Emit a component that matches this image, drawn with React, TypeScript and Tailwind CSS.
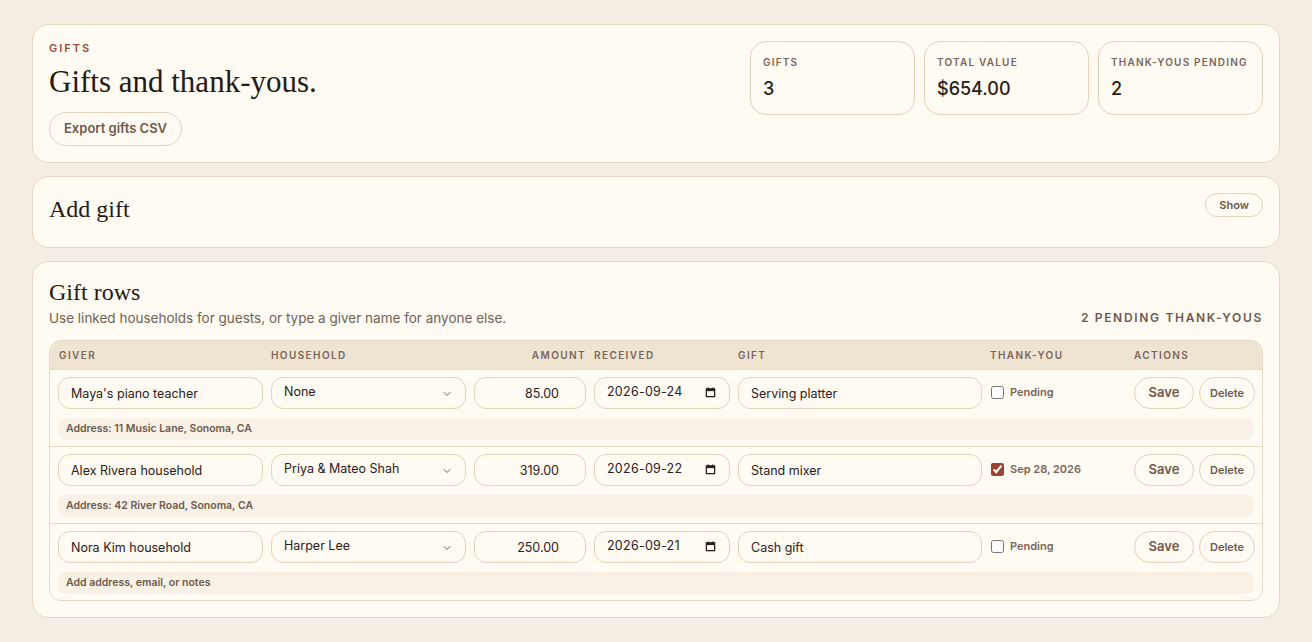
import { ChevronDown } from "lucide-react";

const sans = { fontFamily: "Inter, 'Noto Sans', sans-serif" };
const serif = { fontFamily: "'Liberation Serif', 'DejaVu Serif', serif" };

type Gift = {
  giver: string;
  household: string;
  amount: string;
  received: string;
  gift: string;
  thanked: string | null;
  note: string;
};

const gifts: Gift[] = [
  {
    giver: "Maya's piano teacher",
    household: "None",
    amount: "85.00",
    received: "2026-09-24",
    gift: "Serving platter",
    thanked: null,
    note: "Address: 11 Music Lane, Sonoma, CA",
  },
  {
    giver: "Alex Rivera household",
    household: "Priya & Mateo Shah",
    amount: "319.00",
    received: "2026-09-22",
    gift: "Stand mixer",
    thanked: "Sep 28, 2026",
    note: "Address: 42 River Road, Sonoma, CA",
  },
  {
    giver: "Nora Kim household",
    household: "Harper Lee",
    amount: "250.00",
    received: "2026-09-21",
    gift: "Cash gift",
    thanked: null,
    note: "Add address, email, or notes",
  },
];

const cols = "grid grid-cols-[205px_195px_112px_136px_244px_136px_121px] gap-x-2";

function CalendarGlyph() {
  return (
    <svg viewBox="0 0 12 12" className="h-[11px] w-[11px]" fill="none">
      <rect x="1.5" y="2" width="9" height="8.5" stroke="#2a211c" strokeWidth="1.4" />
      <rect x="1.5" y="2" width="9" height="2.5" fill="#2a211c" />
      <rect x="3" y="0.5" width="1.2" height="2" fill="#2a211c" />
      <rect x="7.8" y="0.5" width="1.2" height="2" fill="#2a211c" />
    </svg>
  );
}

function Stat({ label, value }: { label: string; value: string }) {
  return (
    <div className="rounded-2xl border border-[#e3d3bd] bg-[#fffaf2] px-3 pt-[13px] pb-[13px]">
      <p className="text-[10px] font-semibold uppercase tracking-[0.12em] text-[#7a665a]">{label}</p>
      <p className="mt-[7px] text-[18px] leading-6 font-medium text-[#2a211c]">{value}</p>
    </div>
  );
}

function GiftRow({ g, last }: { g: Gift; last: boolean }) {
  const field =
    "h-8 w-full rounded-xl border border-[#e3d3bd] bg-[#fffaf2] px-3 text-[12.5px] text-[#2a211c] outline-none";
  return (
    <div className={`px-2 pt-[7px] pb-[6px] ${last ? "" : "border-b border-[#e6d8c4]"}`}>
      <div className={`${cols} items-center`}>
        <input className={field} defaultValue={g.giver} />
        <div className="relative">
          <select className={`${field} appearance-none pb-[1px]`} defaultValue={g.household}>
            <option>{g.household}</option>
          </select>
          <ChevronDown className="pointer-events-none absolute right-[13px] top-[11px] h-3 w-3 text-[#6f6259]" strokeWidth={2} />
        </div>
        <input className={`${field} text-right pr-[26px]`} defaultValue={g.amount} />
        <div className={`${field} flex items-center justify-between pr-[13px] pb-[1px]`}>
          <span className="tracking-[0.02em]">{g.received}</span>
          <CalendarGlyph />
        </div>
        <input className={field} defaultValue={g.gift} />
        <label className="flex items-center gap-[6px] pl-px pb-[1px]">
          <input
            type="checkbox"
            defaultChecked={!!g.thanked}
            className="h-[13px] w-[13px] accent-[#9a4434]"
          />
          <span className="text-[11px] font-semibold text-[#7a665a]">{g.thanked ?? "Pending"}</span>
        </label>
        <div className="flex items-center gap-[5px]">
          <button className="h-8 w-[60px] rounded-full border border-[#e3d3bd] text-[13px] font-semibold text-[#6d5a4d]">
            Save
          </button>
          <button className="h-8 w-[56px] rounded-full border border-[#e3d3bd] text-[11px] font-semibold text-[#6d5a4d]">
            Delete
          </button>
        </div>
      </div>
      <div className="mt-[9px] flex h-[22px] items-center rounded-lg bg-[#f9f1e6] px-2 text-[10.5px] font-semibold text-[#6d5a4d]">
        {g.note}
      </div>
    </div>
  );
}

export default function App() {
  return (
    <div className="min-h-[642px] bg-[#f6eee4] px-8 py-6" style={sans}>
      <div className="flex flex-col gap-[13px]">
        <section className="flex justify-between rounded-2xl border border-[#e6d8c4] bg-[#fffaf2] p-4">
          <div className="flex flex-col items-start">
            <p className="text-[11px] leading-[14px] font-semibold uppercase tracking-[0.18em] text-[#9a4a3a]">Gifts</p>
            <h1 className="mt-[7px] text-[31px] leading-[40px] text-[#231a16]" style={serif}>
              Gifts and thank-yous.
            </h1>
            <button className="mt-[10px] h-[34px] rounded-full border border-[#e3d3bd] px-[14px] text-[13px] font-semibold text-[#6d5a4d]">
              Export gifts CSV
            </button>
          </div>
          <div className="grid w-[513px] grid-cols-3 gap-[9px] self-start">
            <Stat label="Gifts" value="3" />
            <Stat label="Total value" value="$654.00" />
            <Stat label="Thank-yous pending" value="2" />
          </div>
        </section>

        <section className="flex items-start justify-between rounded-2xl border border-[#e6d8c4] bg-[#fffaf2] px-4 pt-4 pb-[22px]">
          <h2 className="text-[24px] leading-8 text-[#231a16]" style={serif}>
            Add gift
          </h2>
          <button className="h-6 rounded-full border border-[#e3d3bd] px-[13px] text-[11px] font-semibold text-[#6d5a4d]">
            Show
          </button>
        </section>

        <section className="rounded-2xl border border-[#e6d8c4] bg-[#fffaf2] p-4">
          <div className="flex items-end justify-between">
            <div>
              <h2 className="text-[24px] leading-7 text-[#231a16]" style={serif}>
                Gift rows
              </h2>
              <p className="mt-[2px] text-[13.5px] leading-5 text-[#6f6259]">
                Use linked households for guests, or type a giver name for anyone else.
              </p>
            </div>
            <p className="pb-[1px] text-[12px] font-semibold uppercase tracking-[0.14em] text-[#6d5a4d]">
              2 pending thank-yous
            </p>
          </div>

          <div className="mt-3 overflow-hidden rounded-xl border border-[#e6d8c4]">
            <div className={`${cols} h-[29px] items-center border-b border-[#e6d8c4] bg-[#efe3d2] px-2 text-[10px] font-semibold uppercase tracking-[0.14em] text-[#7a665a]`}>
              <span className="pl-px">Giver</span>
              <span>Household</span>
              <span className="text-right">Amount</span>
              <span>Received</span>
              <span>Gift</span>
              <span>Thank-you</span>
              <span>Actions</span>
            </div>
            {gifts.map((g, i) => (
              <GiftRow key={g.giver} g={g} last={i === gifts.length - 1} />
            ))}
          </div>
        </section>
      </div>
    </div>
  );
}
